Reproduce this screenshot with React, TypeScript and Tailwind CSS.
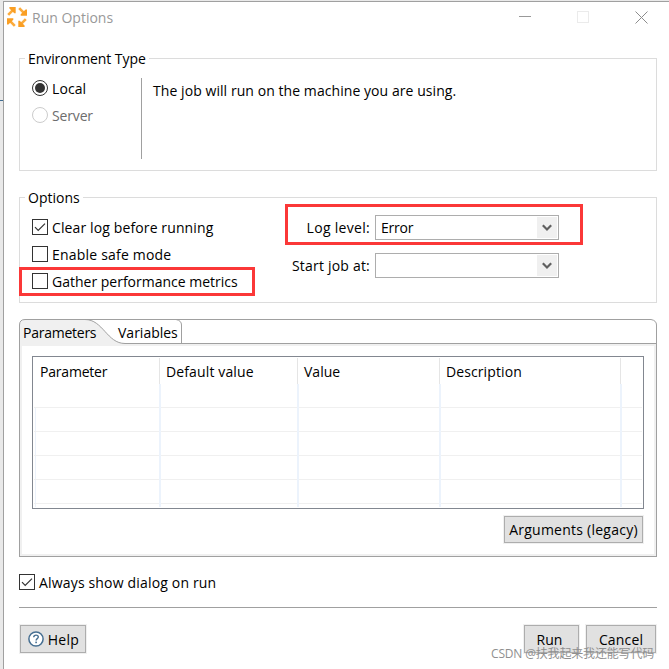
import type { ReactNode } from "react";

interface CheckOptionProps {
  label: string;
  checked?: boolean;
  textClass?: string;
}

interface ComboProps {
  label: string;
  value?: string;
  labelClass?: string;
}

interface PushButtonProps {
  className: string;
  children: ReactNode;
}

interface Column {
  name: string;
  width: string;
  textClass: string;
}

const columns: Column[] = [
  { name: "Parameter", width: "w-[124px]", textClass: "pl-[4px] tracking-[-0.2px]" },
  { name: "Default value", width: "w-[138px]", textClass: "pl-[6px] tracking-[0.13px]" },
  { name: "Value", width: "w-[142px]", textClass: "pl-[6px]" },
  { name: "Description", width: "w-[181px]", textClass: "pl-[6px] tracking-[0.1px]" },
];

const AppIcon = () => (
  <svg width="20" height="20" viewBox="0 0 20 20" fill="none">
    <g stroke="#fbab3c" strokeWidth="2.6">
      <path d="M1.2 7.8 L6.6 2.4" />
      <path d="M12.2 1.2 L17.6 6.6" />
      <path d="M7.8 18.8 L2.4 13.4" />
      <path d="M18.8 12.2 L13.4 17.6" />
    </g>
    <g fill="#fa9f24">
      <path d="M2.4 0 H8.7 V6.3 H7.3 L2.4 1.4 Z" />
      <path d="M20 2.4 V8.7 H13.7 V7.3 L18.6 2.4 Z" />
      <path d="M0 17.6 V11.3 H6.3 V12.7 L1.4 17.6 Z" />
      <path d="M17.6 20 H11.3 V13.7 H12.7 L17.6 18.6 Z" />
    </g>
  </svg>
);

const CheckOption = ({ label, checked, textClass = "" }: CheckOptionProps) => (
  <label className="flex h-[27px] items-start gap-[4px]">
    <span className="mt-[5px] flex size-[16px] shrink-0 items-center justify-center border border-[#333333] bg-white">
      {checked && (
        <svg width="14" height="14" viewBox="0 0 14 14" fill="none">
          <path d="M2 7.2 L5.2 10.4 L12 3.6" stroke="#333333" strokeWidth="1.2" />
        </svg>
      )}
    </span>
    <span className={`leading-[27px] whitespace-nowrap ${textClass}`}>
      {label}
    </span>
  </label>
);

const Combo = ({ label, value, labelClass = "" }: ComboProps) => (
  <div className="flex h-[25px] items-center">
    <span className={`w-[90px] pr-[5px] text-right whitespace-nowrap ${labelClass}`}>
      {label}
    </span>
    <div className="flex h-[25px] w-[184px] items-center justify-between border border-[#adadad] bg-white pr-px pl-[5px]">
      <span className="tracking-[-0.2px]">{value}</span>
      <span className="flex h-[21px] w-[20px] items-center justify-center bg-[#f0f0f0] pr-px">
        <svg width="10" height="8" viewBox="0 0 10 8" fill="none">
          <path d="M0.8 1.3 L5 5.5 L9.2 1.3" stroke="#606060" strokeWidth="2.2" />
        </svg>
      </span>
    </div>
  </div>
);

const PushButton = ({ className, children }: PushButtonProps) => (
  <button
    className={`flex items-center justify-center border border-[#adadad] bg-[#e1e1e1] whitespace-nowrap shadow-[0_0_0_1px_#f0f0f0] ${className}`}
  >
    {children}
  </button>
);

const TitleBar = () => (
  <header className="flex h-[47px] items-start pt-[5px] pl-[3px] text-[#999999]">
    <AppIcon />
    <span className="ml-[5px] h-[20px] leading-[21px]">Run Options</span>
    <div className="mt-[4px] mr-[21px] ml-auto flex gap-[46px]">
      <svg width="12" height="13" viewBox="0 0 12 13">
        <path d="M0 5.5 H12" stroke="#999999" />
      </svg>
      <svg width="12" height="12" viewBox="0 0 12 12" fill="none">
        <rect x="0.5" y="0.5" width="11" height="11" stroke="#ebebeb" />
      </svg>
      <svg width="13" height="13" viewBox="0 0 13 13">
        <path d="M0.5 0.5 L12.5 12.5 M12.5 0.5 L0.5 12.5" stroke="#8c8c8c" />
      </svg>
    </div>
  </header>
);

const EnvironmentType = () => (
  <fieldset className="h-[122px] w-[638px] border border-[#dcdcdc]">
    <legend className="ml-[5px] h-[19px] px-[3px] leading-[19px] tracking-[-0.07px] whitespace-nowrap">
      Environment Type
    </legend>
    <div className="flex pt-[7px] pl-[12px]">
      <div className="flex w-[109px] flex-col">
        <label className="flex h-[27px] items-start gap-[4px]">
          <span className="mt-[5px] flex size-[16px] items-center justify-center rounded-full border border-[#333333]">
            <span className="size-[10px] rounded-full bg-[#333333]" />
          </span>
          <span className="leading-[27px] tracking-[0.1px]">Local</span>
        </label>
        <label className="flex h-[27px] items-start gap-[4px] text-[#6d6d6d]">
          <span className="mt-[5px] size-[16px] rounded-full border border-[#cccccc]" />
          <span className="leading-[27px] tracking-[-0.15px]">Server</span>
        </label>
      </div>
      <div className="mt-[3px] h-[81px] w-px bg-[#a0a0a0]" />
      <p className="mt-[6px] ml-[11px] leading-[20px] tracking-[0.065px] whitespace-nowrap">
        The job will run on the machine you are using.
      </p>
    </div>
  </fieldset>
);

const Options = () => (
  <fieldset className="mt-[17px] h-[115px] w-[638px] border border-[#dcdcdc]">
    <legend className="ml-[5px] h-[19px] px-[3px] leading-[19px]">
      Options
    </legend>
    <div className="relative flex pt-[7px] pl-[12px]">
      <div className="flex w-[241px] flex-col">
        <CheckOption
          label="Clear log before running"
          checked
          textClass="tracking-[0.12px]"
        />
        <CheckOption label="Enable safe mode" textClass="tracking-[0.2px]" />
        <CheckOption label="Gather performance metrics" />
      </div>
      <div className="mt-px ml-[12px] flex flex-col gap-[13px]">
        <Combo
          label="Log level:"
          value="Error"
          labelClass="tracking-[0.3px]"
        />
        <Combo label="Start job at:" labelClass="tracking-[0.2px]" />
      </div>
      {/* Highlight frames */}
      <div className="absolute top-[60px] left-[-1px] h-[29px] w-[236px] border-3 border-[#fb3838]" />
      <div className="absolute top-[-3px] left-[265px] h-[41px] w-[298px] border-3 border-[#fb3838]" />
    </div>
  </fieldset>
);

const TabStrip = () => (
  <div className="relative flex h-[25px]">
    {/* Curved outline of the selected tab */}
    <svg
      className="absolute top-0 left-0"
      width="638"
      height="26"
      viewBox="0 0 638 26"
      fill="none"
    >
      <path
        d="M0.5 26 V6 Q0.5 0.5 6 0.5 H66 C84 0.5 88 24.5 106 24.5 V26 Z"
        fill="#f0f0f0"
      />
      <path
        d="M0.5 26 V6 Q0.5 0.5 6 0.5 H632 Q637.5 1.5 637.5 6 V26 M66 0.5 C84 0.5 88 24.5 106 24.5 H638 M157 0.5 Q162.5 1.5 162.5 6 V24.5"
        stroke="#a0a0a0"
      />
    </svg>
    <span className="relative w-[99px] pl-[4px] leading-[27px] tracking-[-0.25px]">
      Parameters
    </span>
    <span className="relative leading-[27px]">Variables</span>
  </div>
);

const ParameterTable = () => (
  <div className="flex h-[153px] w-[612px] flex-col border border-[#828790] bg-white pt-px pl-px">
    <div className="relative flex h-[149px]">
      {/* Grid rows */}
      <div className="absolute top-[49px] right-[1px] left-0 flex flex-col gap-[23px]">
        {[0, 1, 2, 3, 4].map((row) => (
          <span key={row} className="h-px bg-[#f0f0f0]" />
        ))}
      </div>
      <div className="mt-[49px] ml-px h-[100px] w-px bg-[#ecf2fb]" />
      {columns.map((column) => (
        <div
          key={column.name}
          className={`relative flex shrink-0 flex-col ${column.width}`}
        >
          <div className="h-[26px] border-r border-[#e5e5e5] leading-[27px]">
            <span className={column.textClass}>{column.name}</span>
          </div>
          <div className="mr-[-1px] flex-1 border-r-2 border-[#ecf3fc]" />
        </div>
      ))}
    </div>
  </div>
);

const ParametersPanel = () => (
  <section className="mt-[16px] w-[638px]">
    <TabStrip />
    <div className="h-[213px] border-x border-b border-[#a0a0a0]">
      <div className="flex h-[212px] flex-col border-2 border-[#f0f0f0] pt-[10px] pl-[10px]">
        <ParameterTable />
        <PushButton className="mt-[7px] ml-[472px] h-[27px] w-[139px] tracking-[0.25px]">
          Arguments (legacy)
        </PushButton>
      </div>
    </div>
  </section>
);

const Footer = () => (
  <footer className="mt-[17px] flex w-[638px] pl-px">
    <PushButton className="h-[28px] w-[66px] gap-[4px] pl-px tracking-[0.3px]">
      <svg width="16" height="16" viewBox="0 0 16 16" fill="none">
        <circle cx="8" cy="8" r="7.1" fill="white" stroke="#466f92" strokeWidth="1.5" />
        <path
          d="M5.7 6.3 C5.8 4.7 6.8 4.1 8 4.1 C9.4 4.1 10.3 4.9 10.3 6 C10.3 7.6 8.1 7.7 8.1 9.4"
          stroke="#466f92"
          strokeWidth="1.4"
        />
        <rect x="7.3" y="10.6" width="1.6" height="1.6" fill="#466f92" />
      </svg>
      Help
    </PushButton>
    <PushButton className="ml-[438px] h-[28px] w-[55px] pr-[4px]">Run</PushButton>
    <PushButton className="ml-[7px] h-[28px] w-[70px] tracking-[0.15px]">
      Cancel
    </PushButton>
  </footer>
);

export default function App() {
  return (
    <div className="relative flex h-[669px] w-[669px] overflow-hidden bg-[#e9e9e9] pt-px font-['Open_Sans','Noto_Sans',sans-serif] text-[14px] text-black">
      <div className="mt-[99px] h-px w-[3px] bg-[#3f6c91]" />
      <div className="flex h-[668px] w-[666px] flex-col border-t border-l border-[#a0a0a0] bg-white">
        <TitleBar />
        <main className="flex flex-col pl-[15px]">
          <EnvironmentType />
          <Options />
          <ParametersPanel />
          <div className="mt-[12px]">
            <CheckOption
              label="Always show dialog on run"
              checked
              textClass="tracking-[0.17px]"
            />
          </div>
          <div className="mt-[11px] h-px w-[638px] bg-[#a0a0a0]" />
          <Footer />
        </main>
      </div>
      {/* Watermark */}
      <span className="absolute top-[645px] left-[491px] font-['Open_Sans','Noto_Sans_CJK_SC',sans-serif] text-[12px] leading-[17px] tracking-[-0.17px] whitespace-nowrap text-[#8f8f8f]">
        CSDN @扶我起来我还能写代码
      </span>
    </div>
  );
}
